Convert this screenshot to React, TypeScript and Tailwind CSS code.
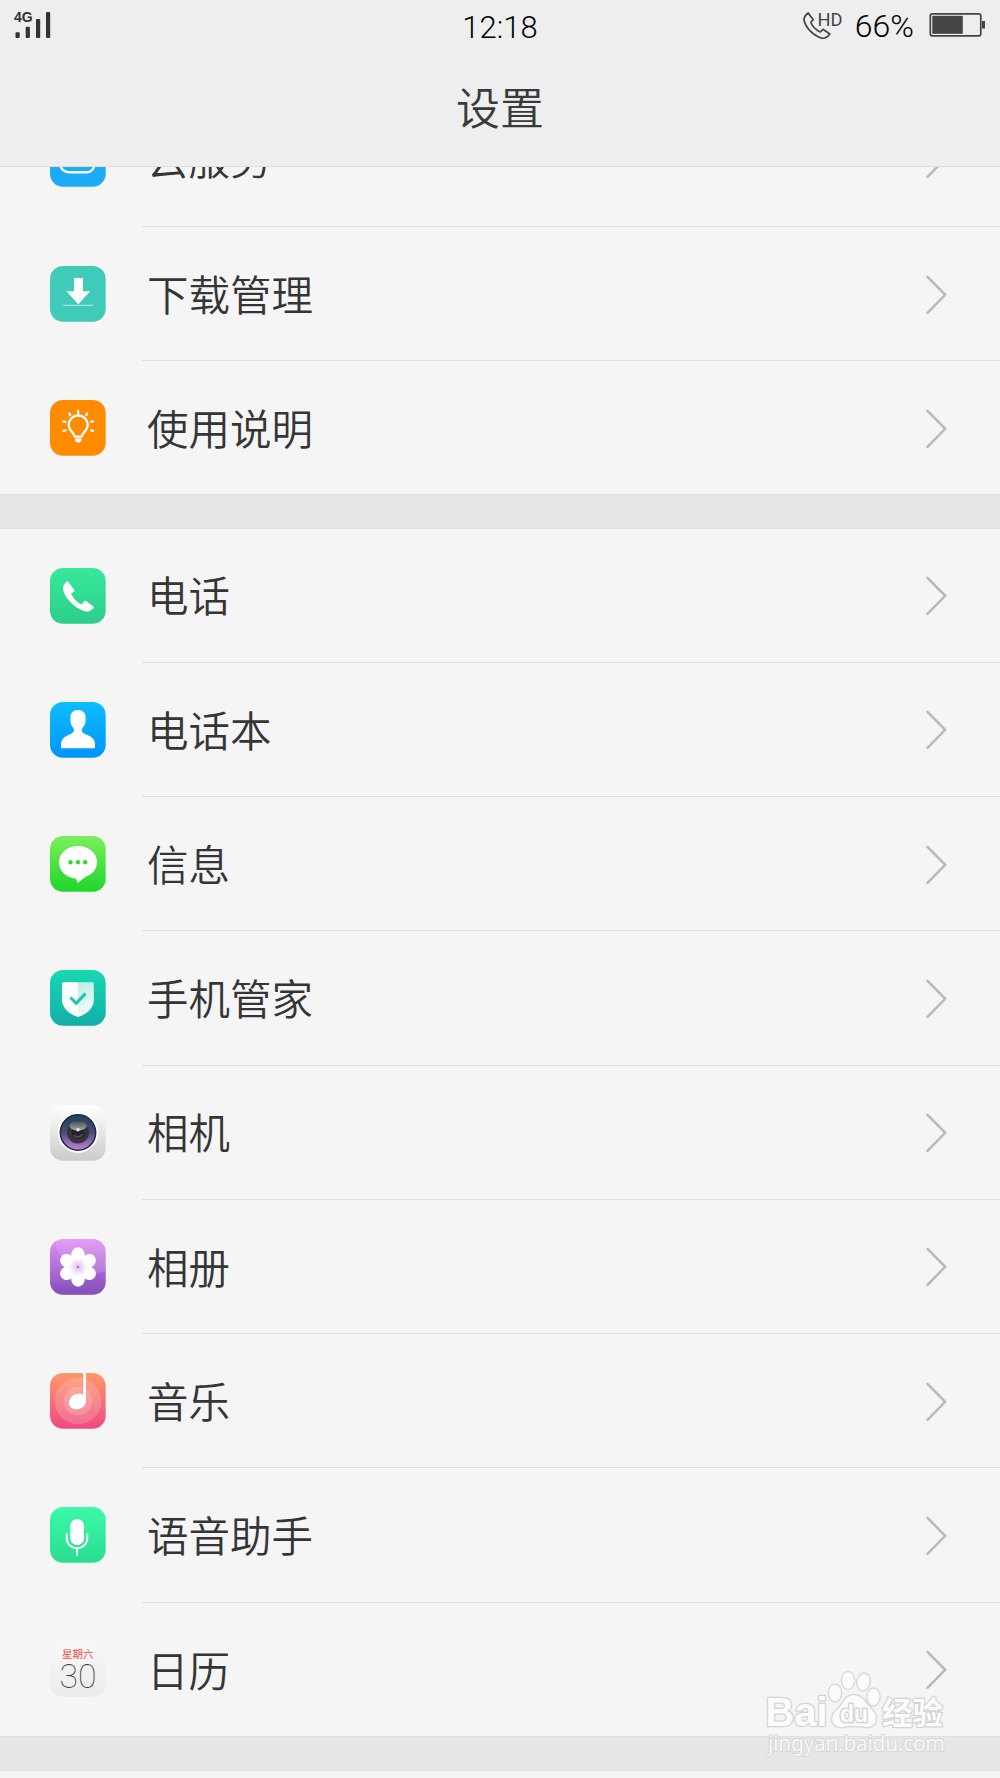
import React from "react";

// Every app icon is drawn on a 56x56 tile
function Tile({ id, from, to, children }: { id: string; from: string; to: string; children?: React.ReactNode }) {
  return (
    <svg width="56" height="56" viewBox="0 0 56 56" className="block shrink-0">
      <defs>
        <linearGradient id={id} x1="0" y1="0" x2="0" y2="1">
          <stop offset="0" stopColor={from} />
          <stop offset="1" stopColor={to} />
        </linearGradient>
        <clipPath id={`${id}-clip`}>
          <rect width="55.700" height="55.700" rx="13" />
        </clipPath>
      </defs>
      <rect width="55.700" height="55.700" rx="13" fill={`url(#${id})`} />
      <g clipPath={`url(#${id}-clip)`}>{children}</g>
    </svg>
  );
}

const CloudIcon = () => (
  <Tile id="cloud" from="#1cacf7" to="#1cacf7">
    <path d="M19 41.300h18a8 8 0 0 0 2-15.500 11.500 11.500 0 0 0-22-1.500 8.600 8.600 0 0 0 2 17z" fill="none" stroke="#fff" strokeWidth="2.400" />
  </Tile>
);

const DownloadIcon = () => (
  <Tile id="download" from="#40cab8" to="#40cab8">
    <path d="M24 12h9v13.300h7.200L28.300 38.300 16.400 25.300H24z" fill="#fff" />
    <path d="M13 39.300h30" stroke="#a8e6dd" strokeWidth="1.300" />
  </Tile>
);

const BulbIcon = () => (
  <Tile id="bulb" from="#ff8c00" to="#ff8c00">
    <g fill="none" stroke="#fff" strokeWidth="2.300" strokeLinecap="round">
      <path d="M24.700 36.700c0-3.500-6-6-6-11.700a9.500 9.500 0 0 1 19 0c0 5.700-6 8.200-6 11.700z" strokeLinejoin="round" />
      <path d="M28.200 11v2M19.200 13.500l1 1.500M37.200 13.500l-1 1.500M13.500 21.400l1.800.5M43 21.400l-1.800.5M13.500 30.900l1.800-.5M43 30.900l-1.800-.5" />
    </g>
    <path d="M25 38.500h6.500v1.300a3.200 2.600 0 0 1-6.500 0z" fill="#fff" />
  </Tile>
);

const PhoneIcon = () => (
  <Tile id="phone" from="#37e99c" to="#2cce8b">
    <path
      d="M16.300 13.800c.7-.8 1.500-.8 2.100.1l6 8.100c.4.800.2 1.300-.5 1.800l-3 1.900c2.700 5.200 6.500 8.700 10.700 10.700l2.600-3.100c.6-.7 1.200-.8 1.900-.3l7 5.200c.9.700 1 1.400.2 2.200-3.200 3-6.300 3.800-10 2.400C24.500 39.600 15.600 31 13.200 22.300c-.8-3.200.5-5.700 3.100-8.500z"
      fill="#fff"
    />
  </Tile>
);

const ContactIcon = () => (
  <Tile id="contact" from="#0fbdfe" to="#0094fa">
    <defs>
      <linearGradient id="contact-shade" x1="0" y1="0" x2="1" y2="1">
        <stop offset="0" stopColor="#7fcafb" stopOpacity="0.6" />
        <stop offset="0.6" stopColor="#fff" stopOpacity="0" />
      </linearGradient>
    </defs>
    <path
      d="M28 8c5 0 8 3.200 7.500 8 .5 4.200-.6 7.500-3 9.800-1.300 2-.8 4.300 1 5.500C38.500 33.800 45 35.500 45 42v4.300H11V42c0-6.500 6.500-8.200 11-10.700 2-1.200 2.500-3.500 1.300-5.500-2.200-2.300-3.300-5.600-2.800-9.800C20 11.200 23 8 28 8z"
      fill="#fff"
    />
    <path d="M32 28.500c0 2 4 3.500 8 6L37 42l-8-5z" fill="url(#contact-shade)" />
  </Tile>
);

const MessageIcon = () => (
  <Tile id="message" from="#7cf05b" to="#1fd52a">
    <path d="M28 10c10.700 0 19 7 19 16.200 0 6.800-4.700 12.200-11.300 14.600L27.500 47c-.5-1.300-.5-3-1.700-4.500C16 41.500 9 35 9 26.200 9 17 17.300 10 28 10z" fill="#fff" />
    <g fill="#36db32">
      <circle cx="20.500" cy="26.300" r="2.200" />
      <circle cx="28" cy="26.300" r="2.200" />
      <circle cx="35.200" cy="26.300" r="2.200" />
    </g>
  </Tile>
);

const ShieldIcon = () => (
  <Tile id="shield" from="#18d8b2" to="#11aea9">
    <defs>
      <linearGradient id="shield-half" x1="0" y1="0" x2="0.3" y2="1">
        <stop offset="0" stopColor="#b9eee2" />
        <stop offset="1" stopColor="#f2fcfa" />
      </linearGradient>
    </defs>
    <path d="M13.500 12.300H28V47c-9-3-16-9-16-17V13.800c0-1 .5-1.500 1.500-1.500z" fill="#fff" />
    <path d="M28 12.300h14.300c1 0 1.500.5 1.500 1.500V30c0 8-6.800 14-15.800 17z" fill="url(#shield-half)" />
    <path d="M20.500 27.500l5.700 5.800 9.300-9.800" fill="none" stroke="#1fc5b0" strokeWidth="3.200" />
  </Tile>
);

const CameraIcon = () => (
  <Tile id="camera" from="#ffffff" to="#cbcbcb">
    <defs>
      <linearGradient id="lens" x1="0" y1="0" x2="0" y2="1">
        <stop offset="0" stopColor="#1d4356" />
        <stop offset="0.5" stopColor="#4b4a78" />
        <stop offset="1" stopColor="#c982e2" />
      </linearGradient>
      <linearGradient id="lens-light" x1="0" y1="0" x2="0" y2="1">
        <stop offset="0" stopColor="#6b7479" stopOpacity="0.5" />
        <stop offset="1" stopColor="#b5b5b5" />
      </linearGradient>
    </defs>
    <circle cx="28" cy="27.500" r="20.300" fill="#fff" />
    <circle cx="28" cy="27.500" r="17.700" fill="url(#lens)" stroke="#202a36" strokeWidth="1.500" />
    <circle cx="28" cy="27.500" r="11" fill="#363438" />
    <circle cx="28" cy="27.500" r="6.500" fill="#262427" />
    <path d="M23.800 30a5 5 0 0 0 8.500-1" fill="none" stroke="#5d4667" strokeWidth="1.800" />
    <path d="M19.300 20.500c1-5.500 16.500-5.500 17.500 0 0 3-5 5-8.800 5s-8.700-2-8.700-5z" fill="url(#lens-light)" />
    <circle cx="28" cy="24.800" r="1.700" fill="#e8e8e8" />
  </Tile>
);

const AlbumIcon = () => (
  <Tile id="album" from="#e08ff3" to="#8550bd">
    <defs>
      <linearGradient id="petal" x1="0" y1="0" x2="0" y2="1">
        <stop offset="0.550" stopColor="#fff" />
        <stop offset="1" stopColor="#dcc0ea" />
      </linearGradient>
    </defs>
    <path d="M5 0h51v33C27 37 8 25 5 0z" fill="#fff" opacity="0.13" />
    <path d="M0 44c18 1 36-3 56-14v26H0z" fill="#7d49b8" opacity="0.18" />
    {[60, 120, 180, 240, 300, 0].map((angle) => (
      <path
        key={angle}
        d="M28 28C24 24.500 21.300 20 21.300 15.500a6.700 7.200 0 0 1 13.400 0c0 4.500-2.700 9-6.700 12.500z"
        transform={`rotate(${angle} 28 28)`}
        fill="url(#petal)"
      />
    ))}
    <circle cx="28" cy="28" r="1.300" fill="#b878cc" />
  </Tile>
);

const MusicIcon = () => (
  <Tile id="music" from="#fe986b" to="#ee4b7f">
    <circle cx="28" cy="28" r="23.300" fill="#fff" opacity="0.17" />
    <circle cx="28" cy="28" r="14.200" fill="#fff" opacity="0.17" />
    <path d="M33.300 0h2.700v27.500c0 5-4 8.700-9.300 8.700-4.700 0-7.900-2.600-7.700-6.500.2-5 4.700-8.900 9.700-8.900 1.800 0 3.400.4 4.600 1.300z" fill="#fff" />
  </Tile>
);

const VoiceIcon = () => (
  <Tile id="voice" from="#3cfaa9" to="#2bdc90">
    <rect x="20.300" y="12" width="13.700" height="26" rx="6.800" fill="#fff" />
    <path d="M16.700 26.500v4.200c0 6 4.300 10.500 10.300 10.500s10.300-4.500 10.300-10.500v-4.200M27 41.200v7.500" fill="none" stroke="#fff" strokeWidth="1.900" />
  </Tile>
);

const CalendarIcon = () => (
  <Tile id="calendar" from="#f8f8f8" to="#ebebeb">
    <text x="27.700" y="16.500" fontSize="10.500" fill="#ee4b42" textAnchor="middle" fontFamily="Noto Sans CJK SC, sans-serif">
      星期六
    </text>
    <text
      x="28"
      y="46.500"
      fontSize="34"
      fontWeight="100"
      fill="#3c3c3c"
      textAnchor="middle"
      textLength="37"
      lengthAdjust="spacingAndGlyphs"
      fontFamily="Roboto, Inter, sans-serif"
    >
      30
    </text>
  </Tile>
);

const generalItems = [
  { name: "云服务", icon: CloudIcon, row: "h-[136px] border-b pb-[1px]" },
  { name: "下载管理", icon: DownloadIcon, row: "h-[134px] border-b" },
  { name: "使用说明", icon: BulbIcon, row: "h-[133px]" },
];

const appItems = [
  { name: "电话", icon: PhoneIcon },
  { name: "电话本", icon: ContactIcon },
  { name: "信息", icon: MessageIcon },
  { name: "手机管家", icon: ShieldIcon },
  { name: "相机", icon: CameraIcon },
  { name: "相册", icon: AlbumIcon },
  { name: "音乐", icon: MusicIcon },
  { name: "语音助手", icon: VoiceIcon },
  { name: "日历", icon: CalendarIcon },
];

function Row({ name, icon: Icon, row }: { name: string; icon: React.ComponentType; row: string }) {
  return (
    <div className="flex shrink-0 pl-[50px]">
      <div className="flex w-[92px] items-center">
        <Icon />
      </div>
      <div className={`flex flex-1 items-center justify-between border-[#dfdfdf] pl-[5px] pr-[53px] ${row}`}>
        <span className="text-[41.5px] font-[350] leading-none text-[#353535]">{name}</span>
        <svg width="22" height="40" viewBox="0 0 22 40" className="block">
          <path d="M2.500 2.800L20.200 20.800 2.500 38.800" fill="none" stroke="#b9b9b9" strokeWidth="2.500" strokeLinecap="round" />
        </svg>
      </div>
    </div>
  );
}

function StatusBar() {
  return (
    <div className="grid h-[52px] grid-cols-3 items-start text-black">
      <svg width="60" height="50" viewBox="0 0 60 50" className="block">
        <text x="14" y="22" fontSize="14" fontWeight="700" fill="#333" fontFamily="Liberation Sans, sans-serif">
          4G
        </text>
        <g fill="#333">
          <rect x="15.500" y="32.300" width="4.200" height="5.700" rx="1" />
          <rect x="25.700" y="26.700" width="4.200" height="11.300" rx="1" />
          <rect x="36" y="19" width="4.200" height="19" rx="1" />
          <rect x="46" y="12" width="4.200" height="26" rx="1" />
        </g>
      </svg>
      <div className="pt-[12px] text-center font-[Roboto] text-[31px] font-[350] leading-[32px]">12:18</div>
      <div className="flex justify-end pr-[14px]">
        <svg width="42" height="50" viewBox="0 0 42 50" className="mr-[11px] block">
          <path
            d="M6.200 13l5 6.700-2.400 2.600c1.500 4 5 7.700 9.500 9.700l2.700-2.700 6.800 4.700c-2.200 3-4.800 4.600-8 4.200C11 35.500 3.500 27.500 2 20c-.2-2.700 1.500-5 4.200-7z"
            fill="none"
            stroke="#444"
            strokeWidth="1.700"
            strokeLinejoin="round"
          />
          <text x="15.500" y="25.700" fontSize="18.500" fill="#444" textLength="25" lengthAdjust="spacingAndGlyphs" fontFamily="Roboto, sans-serif">
            HD
          </text>
        </svg>
        <div className="pt-[10px] font-[Roboto] text-[32px] font-[350] leading-[32px]">66%</div>
        <svg width="57" height="50" viewBox="0 0 57 50" className="ml-[15px] block">
          <rect x="1.300" y="13.800" width="50.500" height="22" rx="2" fill="none" stroke="#444" strokeWidth="1.700" />
          <rect x="3.300" y="15.800" width="30.500" height="18" fill="#444" />
          <rect x="53" y="21" width="3" height="7.500" fill="#444" />
        </svg>
      </div>
    </div>
  );
}

function Watermark() {
  return (
    <svg width="190" height="96" viewBox="0 0 190 96" className="absolute left-[760px] top-[1667px]">
      <g fill="#fcfcfc" stroke="#d9d9d9" strokeWidth="1.500">
        <ellipse cx="75" cy="26" rx="6.700" ry="9" />
        <ellipse cx="88" cy="13.500" rx="6.700" ry="9" />
        <ellipse cx="103.500" cy="15" rx="6.700" ry="9" transform="rotate(12 103.5 15)" />
        <ellipse cx="113.500" cy="30" rx="6.700" ry="9" />
        <path d="M94 27.500c7 0 10.500 5 14 10 4 5.500 9 7.500 8.500 15-.4 6-5.500 9-11.500 8-7-1.200-15-1.200-22 0-6 1-11-2-11.500-8-.5-7.500 5.500-9.500 9.500-15 3-5 6-10 13-10z" />
      </g>
      <g fill="#fcfcfc" stroke="#d3d3d3" strokeWidth="2.500" paintOrder="stroke" strokeLinejoin="round" fontWeight="700">
        <text x="5.500" y="59" fontSize="40" textLength="62" lengthAdjust="spacingAndGlyphs" fontFamily="Liberation Sans, sans-serif">
          Bai
        </text>
        <text x="80" y="55" fontSize="24" textLength="28" lengthAdjust="spacingAndGlyphs" strokeWidth="3" fontFamily="Liberation Sans, sans-serif">
          du
        </text>
        <text x="122" y="57" fontSize="31" textLength="61" lengthAdjust="spacingAndGlyphs" fontFamily="Noto Sans CJK SC, sans-serif">
          经验
        </text>
      </g>
      <text
        x="8"
        y="83.500"
        fontSize="21"
        fill="#f7f7f7"
        stroke="#d6d6d6"
        strokeWidth="1.800"
        paintOrder="stroke"
        textLength="177"
        fontFamily="Noto Sans, sans-serif"
      >
        jingyan.baidu.com
      </text>
    </svg>
  );
}

export default function App() {
  return (
    <div className="relative flex h-[1778px] w-[1000px] flex-col overflow-hidden bg-[#f5f5f5] font-['Noto_Sans_CJK_SC',sans-serif]">
      {/* Header */}
      <header className="h-[167px] shrink-0 border-b border-[#dedede] bg-[#eeeeee]">
        <StatusBar />
        <h1 className="pt-[32px] text-center text-[44px] font-[350] leading-[44px] text-[#3a3a3a]">设置</h1>
      </header>

      {/* Scrolled list, its first row sits partly under the header */}
      <section className="flex h-[327px] shrink-0 flex-col justify-end overflow-hidden">
        {generalItems.map((item) => (
          <Row key={item.name} {...item} />
        ))}
      </section>
      <div className="h-[34.5px] shrink-0 border-y border-[#dfdfdf] bg-[#e6e6e6]" />

      <section className="flex shrink-0 flex-col">
        {appItems.map((item, i) => (
          <Row key={item.name} {...item} row={i < appItems.length - 1 ? "h-[134.25px] border-b" : "h-[133.5px]"} />
        ))}
      </section>
      <div className="h-[34.5px] shrink-0 border-y border-[#e0e0e0] bg-[#e6e6e6]" />

      <Watermark />
    </div>
  );
}
